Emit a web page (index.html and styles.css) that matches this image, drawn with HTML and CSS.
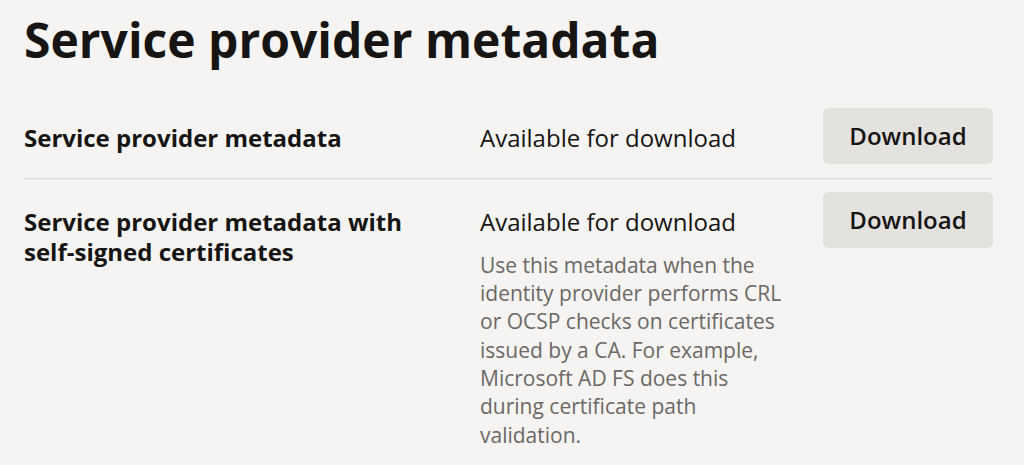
FILE: index.html
```html
<!DOCTYPE html>
<html lang="en">
<head>
<meta charset="utf-8">
<title>Service provider metadata</title>
<link rel="stylesheet" href="styles.css">
</head>
<body>
<main class="page">
  <h1 class="title">Service provider metadata</h1>
  <div class="list">
    <div class="row row-first">
      <div class="label">Service provider metadata</div>
      <div class="status">
        <div class="status-text">Available for download</div>
      </div>
      <div class="action"><button class="btn" type="button">Download</button></div>
    </div>
    <div class="row">
      <div class="label">Service provider metadata with self-signed certificates</div>
      <div class="status">
        <div class="status-text">Available for download</div>
        <p class="desc">Use this metadata when the identity provider performs CRL or OCSP checks on certificates issued by a CA. For example, Microsoft AD FS does this during certificate path validation.</p>
      </div>
      <div class="action"><button class="btn" type="button">Download</button></div>
    </div>
  </div>
</main>
</body>
</html>
```

FILE: styles.css
```css
html, body {
  margin: 0;
  padding: 0;
  background: #f5f4f2;
  color: #161513;
  font-family: "Open Sans", "Noto Sans", sans-serif;
}

.page {
  padding: 0 31px 0 24px;
}

.title {
  margin: 11px 0 26px;
  font-size: 48px;
  line-height: 1.2;
  font-weight: 700;
  letter-spacing: 0;
}

.row {
  display: grid;
  grid-template-columns: 1fr 343px 170px;
  padding: 13px 0 14px;
}

.row-first {
  border-bottom: 1px solid #dedcd9;
}

.label {
  padding: 15px 24px 0 0;
  font-size: 24px;
  line-height: 30px;
  font-weight: 700;
}

.status {
  padding-top: 15px;
}

.status-text {
  font-size: 24px;
  line-height: 30px;
}

.desc {
  margin: 14px 0 0;
  max-width: 310px;
  font-size: 21px;
  line-height: 28.33px;
  color: #6b6865;
}

.btn {
  display: block;
  width: 170px;
  height: 56px;
  border: 0;
  border-radius: 6px;
  background: #e4e2df;
  color: #161513;
  font-family: "Open Sans", "Noto Sans", sans-serif;
  font-size: 24px;
  font-weight: 600;
  cursor: pointer;
}
```
